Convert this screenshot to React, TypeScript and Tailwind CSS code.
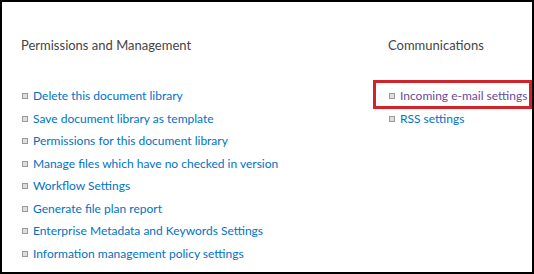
import React from 'react';

type Section = {
  title: string;
  links: { label: string; visited?: boolean; highlighted?: boolean }[];
};

const permissions: Section = {
  title: 'Permissions and Management',
  links: [
    { label: 'Delete this document library' },
    { label: 'Save document library as template' },
    { label: 'Permissions for this document library' },
    { label: 'Manage files which have no checked in version' },
    { label: 'Workflow Settings' },
    { label: 'Generate file plan report' },
    { label: 'Enterprise Metadata and Keywords Settings' },
    { label: 'Information management policy settings' },
  ],
};

const communications: Section = {
  title: 'Communications',
  links: [
    { label: 'Incoming e-mail settings', visited: true, highlighted: true },
    { label: 'RSS settings' },
  ],
};

function Bullet() {
  return <span className="inline-block w-[6px] h-[6px] border border-[#9a9a9a] bg-[#dedede] shrink-0" />;
}

function SettingsSection({ section }: { section: Section }) {
  return (
    <div>
      <h3 className="text-[13px] leading-[20px] text-[#444444] font-normal">{section.title}</h3>
      <ul className="mt-[30px]">
        {section.links.map((link) => (
          <li key={link.label} className="relative flex items-center gap-[5px] h-[22.5px] pl-[1px]">
            {link.highlighted && (
              <span className="absolute left-[-15px] right-0 top-[-5px] bottom-[-1px] border-[3px] border-[#d2232a] pointer-events-none" />
            )}
            <Bullet />
            <a
              href="#"
              className={`text-[12px] whitespace-nowrap ${link.visited ? 'text-[#6a4a9c]' : 'text-[#0072c6]'}`}
            >
              {link.label}
            </a>
          </li>
        ))}
      </ul>
    </div>
  );
}

export default function App() {
  return (
    <div
      className="w-[534px] h-[274px] border-2 border-black bg-white flex overflow-hidden"
      style={{ fontFamily: 'Lato, "Open Sans", sans-serif' }}
    >
      <div className="w-[367px] shrink-0 pl-[19px] pt-[33px]">
        <SettingsSection section={permissions} />
      </div>
      <div className="flex-1 pl-[19px] pt-[33px]">
        <SettingsSection section={communications} />
      </div>
    </div>
  );
}
